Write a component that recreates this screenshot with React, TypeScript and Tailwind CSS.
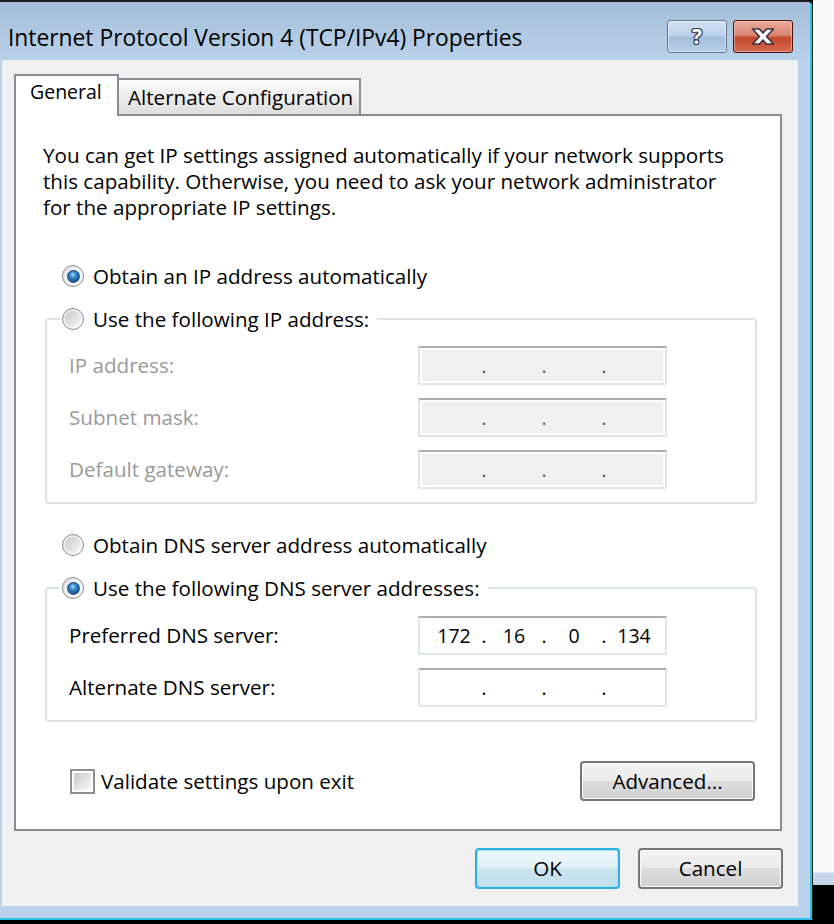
import React from "react";

const Radio = ({ checked }: { checked?: boolean }) => (
  <span className="w-[22px] h-[22px] rounded-full border border-[#8c8e91] bg-gradient-to-br from-[#e3e3e3] to-white flex items-center justify-center shrink-0">
    {checked ? (
      <span className="w-[13px] h-[13px] rounded-full border border-[#1b4a7a] bg-[radial-gradient(circle_at_45%_35%,#a9dcf8_0%,#2f7fc2_35%,#0c3f78_100%)]" />
    ) : (
      <span className="w-[16px] h-[16px] rounded-full bg-gradient-to-br from-[#c9c9c9] to-[#f7f7f7]" />
    )}
  </span>
);

const IpField = ({ values, disabled }: { values?: string[]; disabled?: boolean }) => {
  const v = values ?? ["", "", "", ""];
  return (
    <div className="w-[249px] h-[39px] border-2 border-[#e0e5ec] border-t-[#abadb3] shrink-0">
      <div
        className={`h-full flex items-center pl-[8px] border-2 border-white text-[19.5px] ${
          disabled ? "bg-[#f0f0f0] text-[#555]" : "bg-white text-black"
        }`}
      >
        {v.map((x, i) => (
          <React.Fragment key={i}>
            <span className="w-[48px] text-center">{x}</span>
            {i < 3 && <span className="w-[12px] text-center">.</span>}
          </React.Fragment>
        ))}
      </div>
    </div>
  );
};

const FieldRow = ({ label, disabled, values }: { label: string; disabled?: boolean; values?: string[] }) => (
  <div className="flex items-center h-[39px]">
    <span className={`w-[349px] ${disabled ? "text-[#9a9a9a]" : "text-black"}`}>{label}</span>
    <IpField values={values} disabled={disabled} />
  </div>
);

const Button = ({ label, primary }: { label: string; primary?: boolean }) => (
  <button
    className={`w-[145px] h-[41px] rounded-[4px] border-2 text-black flex items-center justify-center ${
      primary
        ? "border-[#2bb0e0] shadow-[inset_0_0_0_1px_#a6e6f9] bg-[linear-gradient(to_bottom,#eef8fc_0%,#e1f1f8_50%,#cbe5f1_50%,#c0dfed_100%)]"
        : "border-[#767676] shadow-[inset_0_0_0_1px_#fbfbfb] bg-[linear-gradient(to_bottom,#f3f3f3_0%,#ebebeb_50%,#dddddd_50%,#d0d0d0_100%)]"
    }`}
  >
    {label}
  </button>
);

export default function App() {
  return (
    <div className="w-[834px] h-[924px] bg-black flex flex-col overflow-hidden font-['Open_Sans',sans-serif] text-[20.6px] text-black">
      <div className="flex h-[920px]">
        {/* dialog window */}
        <div className="w-[813px] h-[920px] flex flex-col border-t-2 border-r border-[#1f1f1f] rounded-tr-[6px] overflow-hidden">
          <div className="flex-1 flex flex-col border-r-2 border-b-2 border-[#2fc3e3] bg-[#bbd2eb]">
            {/* title bar */}
            <div className="h-[58px] flex items-start bg-gradient-to-b from-[#a4bed9] to-[#bad1ea]">
              <span className="mt-[22px] ml-[8px] leading-[28px] text-[22.8px] whitespace-nowrap">
                Internet Protocol Version 4 (TCP/IPv4) Properties
              </span>
              <div className="ml-auto mt-[18px] mr-[17px] flex gap-[6px]">
                <div className="w-[60px] h-[33px] rounded-[3px] border border-[#66778f] shadow-[inset_0_0_0_1px_rgba(255,255,255,0.45)] bg-[linear-gradient(to_bottom,#d2e1f2_0%,#bdd2ea_48%,#a3bddc_52%,#b9cfe8_100%)] flex items-center justify-center">
                  <span className="text-white font-bold text-[21px] leading-none [text-shadow:1px_0_#3b4250,-1px_0_#3b4250,0_1px_#3b4250,0_-1px_#3b4250,1px_1px_#3b4250,-1px_-1px_#3b4250,1px_-1px_#3b4250,-1px_1px_#3b4250]">
                    ?
                  </span>
                </div>
                <div className="w-[60px] h-[33px] rounded-[3px] border border-[#4a1414] shadow-[inset_0_0_0_1px_rgba(255,210,200,0.5)] bg-[linear-gradient(to_bottom,#eaaa9a_0%,#d98672_46%,#c2472d_54%,#d46a50_100%)] flex items-center justify-center">
                  <svg width="24" height="17" viewBox="0 0 24 17">
                    <polygon
                      points="1.5,1 8.5,1 12,5 15.5,1 22.5,1 15.5,8.5 22.5,16 15.5,16 12,12 8.5,16 1.5,16 8.5,8.5"
                      fill="#ffffff"
                      stroke="#3a3340"
                      strokeWidth="1.6"
                      strokeLinejoin="round"
                    />
                  </svg>
                </div>
              </div>
            </div>

            {/* client area */}
            <div className="flex pl-[2px] pr-[12px]">
              <div className="w-[796px] h-[846px] bg-[#f0f0f0] pt-[14px] pl-[12px] pr-[16px] flex flex-col">
                {/* tabs */}
                <div className="flex items-end -mb-[2px] relative z-10">
                  <div className="w-[105px] h-[42px] bg-white border-2 border-b-0 border-[#898c95] pl-[14px] pt-[3px] leading-[26px] text-[19.5px]">
                    General
                  </div>
                  <div className="w-[242px] h-[36px] mb-[2px] border-2 border-l-0 border-b-0 border-[#898c95] bg-gradient-to-b from-[#fbfbfb] to-[#dedede] pl-[9px] flex items-center whitespace-nowrap">
                    Alternate Configuration
                  </div>
                </div>

                {/* panel */}
                <div className="w-[768px] h-[717px] bg-white border-2 border-[#898c95] pt-[26px] pl-[29px] pr-[23px] flex flex-col">
                  <p className="-ml-[2px] leading-[26px] whitespace-nowrap">
                    You can get IP settings assigned automatically if your network supports
                    <br />
                    this capability. Otherwise, you need to ask your network administrator
                    <br />
                    for the appropriate IP settings.
                  </p>

                  <div className="mt-[42px] ml-[17px] h-[28px] flex items-center gap-[9px]">
                    <Radio checked />
                    <span>Obtain an IP address automatically</span>
                  </div>

                  <fieldset className="mt-[15px] border-2 border-[#dbe2ea] rounded-[4px]">
                    <legend className="ml-[13px] pl-[2px] pr-[8px] h-[28px] flex items-center gap-[9px]">
                      <Radio />
                      <span>Use the following IP address:</span>
                    </legend>
                    <div className="pl-[22px] pt-[13px] pb-[13px] flex flex-col gap-[13px]">
                      <FieldRow label="IP address:" disabled />
                      <FieldRow label="Subnet mask:" disabled />
                      <FieldRow label="Default gateway:" disabled />
                    </div>
                  </fieldset>

                  <div className="mt-[27px] ml-[17px] h-[28px] flex items-center gap-[9px]">
                    <Radio />
                    <span>Obtain DNS server address automatically</span>
                  </div>

                  <fieldset className="mt-[15px] border-2 border-[#dbe2ea] rounded-[4px]">
                    <legend className="ml-[13px] pl-[2px] pr-[8px] h-[28px] flex items-center gap-[9px]">
                      <Radio checked />
                      <span>Use the following DNS server addresses:</span>
                    </legend>
                    <div className="pl-[22px] pt-[14px] pb-[13px] flex flex-col gap-[13px]">
                      <FieldRow label="Preferred DNS server:" values={["172", "16", "0", "134"]} />
                      <FieldRow label="Alternate DNS server:" />
                    </div>
                  </fieldset>

                  <div className="mt-[39px] h-[40px] flex items-center pl-[25px] pr-[2px]">
                    <span className="w-[25px] h-[25px] border-2 border-[#8f8f8f] bg-white p-[2px] shrink-0">
                      <span className="block w-full h-full bg-gradient-to-br from-[#c8c8c8] to-[#fafafa]" />
                    </span>
                    <span className="ml-[6px]">Validate settings upon exit</span>
                    <button className="ml-auto w-[175px] h-[40px] rounded-[4px] border-2 border-[#767676] shadow-[inset_0_0_0_1px_#fbfbfb] bg-[linear-gradient(to_bottom,#f3f3f3_0%,#ebebeb_50%,#dddddd_50%,#d0d0d0_100%)] flex items-center justify-center">
                      Advanced...
                    </button>
                  </div>
                </div>

                {/* dialog buttons */}
                <div className="mt-[17px] flex justify-end gap-[18px] -mr-[1px]">
                  <Button label="OK" primary />
                  <Button label="Cancel" />
                </div>
              </div>
            </div>
          </div>
        </div>

        {/* background beyond the window */}
        <div className="flex-1 flex flex-col">
          <div className="h-[872px] bg-[#fafafa]" />
          <div className="h-[13px] bg-[#c6d7ea] border-t border-[#dfe9f4]" />
        </div>
      </div>
    </div>
  );
}
